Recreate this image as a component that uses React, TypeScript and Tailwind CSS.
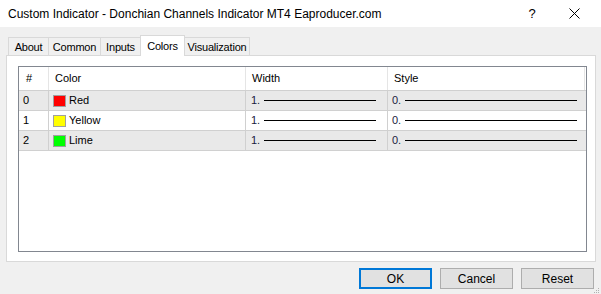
import React from "react";

const tabs = [
  { name: "About", w: "w-[41px]" },
  { name: "Common", w: "w-[53px]" },
  { name: "Inputs", w: "w-[41px]" },
  { name: "Colors", w: "w-[45px]" },
  { name: "Visualization", w: "w-[66px]" },
];

const rows = [
  { id: 0, name: "Red", swatch: "bg-[#ff0000]" },
  { id: 1, name: "Yellow", swatch: "bg-[#ffff00]" },
  { id: 2, name: "Lime", swatch: "bg-[#00ff00]" },
];

function Line({ width }: { width: string }) {
  return <div className={`h-px bg-black ${width}`} />;
}

export default function App() {
  return (
    <div
      className="w-[601px] h-[294px] bg-[#f0f0f0] text-[11px] text-black overflow-hidden"
      style={{ fontFamily: '"Liberation Sans", Arial, sans-serif' }}
    >
      {/* title bar */}
      <div className="h-[27px] bg-white flex items-center pl-2 pr-0">
        <div className="flex-1 text-[12px]">
          Custom Indicator - Donchian Channels Indicator MT4 Eaproducer.com
        </div>
        <div className="w-[46px] text-center text-[13px]">?</div>
        <div className="w-[46px] flex justify-center pr-2">
          <svg width="11" height="11" viewBox="0 0 11 11">
            <path d="M0.5 0.5 L10.5 10.5 M10.5 0.5 L0.5 10.5" stroke="#000" strokeWidth="1" />
          </svg>
        </div>
      </div>

      {/* tabs */}
      <div className="pl-[6px] pt-[8px]">
        <div className="flex pl-[2px] h-[20px] items-end relative z-10 tracking-[-0.2px] text-[11px]">
          {tabs.map((t, i) =>
            t.name === "Colors" ? (
              <div
                key={t.name}
                className={`${t.w} h-[21px] -mb-px -ml-px bg-white border border-b-0 border-[#d9d9d9] flex justify-center pt-[2px]`}
              >
                {t.name}
              </div>
            ) : (
              <div
                key={t.name}
                className={`${t.w} h-[18px] bg-[#f0f0f0] border border-b-0 border-[#d9d9d9] flex items-center justify-center pt-px ${
                  i === 0 ? "" : "-ml-px"
                }`}
              >
                {t.name}
              </div>
            )
          )}
        </div>

        {/* panel */}
        <div className="w-[590px] h-[207px] bg-white border border-[#d9d9d9] pl-[11px] pt-[10px] pr-[8px] pb-[9px]">
          <div className="h-full border border-[#828790] bg-white">
            <div className="flex h-[24px] items-center border-b border-[#d0d0d0] bg-white">
              <div className="w-[30px] pl-[7px] h-full flex items-center border-r border-[#e5e5e5]">#</div>
              <div className="w-[197px] pl-[6px] h-full flex items-center border-r border-[#e5e5e5]">Color</div>
              <div className="w-[142px] pl-[6px] h-full flex items-center border-r border-[#e5e5e5]">Width</div>
              <div className="w-[197px] pl-[6px] h-full flex items-center border-r border-[#e5e5e5]">Style</div>
            </div>
            {rows.map((r) => (
              <div
                key={r.id}
                className={`flex h-[20px] items-center border-b border-[#d0d0d0] ${
                  r.id % 2 === 0 ? "bg-[#e9e9e9]" : "bg-white"
                }`}
              >
                <div className="w-[30px] pl-[4px] h-full flex items-center border-r border-[#d0d0d0]">{r.id}</div>
                <div className="w-[197px] pl-[4px] h-full flex items-center gap-[3px] border-r border-[#d0d0d0]">
                  <div className={`w-[13px] h-[12px] border border-[#a0a0a0] ${r.swatch}`} />
                  <span>{r.name}</span>
                </div>
                <div className="w-[142px] pl-[5px] h-full flex items-center gap-[4px] border-r border-[#d0d0d0]">
                  <span className="text-[#1a1a40]">1.</span>
                  <Line width="w-[112px]" />
                </div>
                <div className="w-[197px] pl-[4px] h-full flex items-center gap-[4px]">
                  <span className="text-[#1a1a40]">0.</span>
                  <Line width="w-[172px]" />
                </div>
              </div>
            ))}
          </div>
        </div>
      </div>

      {/* buttons */}
      <div className="flex justify-end gap-[8px] pr-[7px] pt-[6px] relative text-[12px]">
        <button className="w-[73px] h-[21px] bg-[#e1e1e1] border-2 border-[#0078d7] flex items-center justify-center">
          OK
        </button>
        <button className="w-[73px] h-[21px] bg-[#e1e1e1] border border-[#adadad] flex items-center justify-center">
          Cancel
        </button>
        <button className="w-[73px] h-[21px] bg-[#e1e1e1] border border-[#adadad] flex items-center justify-center">
          Reset
        </button>
        <svg className="absolute right-[1px] top-[26px]" width="6" height="6" viewBox="0 0 6 6">
          <rect x="4" y="0" width="1" height="1" fill="#b0b0b0" />
          <rect x="2" y="2" width="1" height="1" fill="#b0b0b0" />
          <rect x="4" y="2" width="1" height="1" fill="#b0b0b0" />
          <rect x="0" y="4" width="1" height="1" fill="#b0b0b0" />
          <rect x="2" y="4" width="1" height="1" fill="#b0b0b0" />
          <rect x="4" y="4" width="1" height="1" fill="#b0b0b0" />
        </svg>
      </div>
    </div>
  );
}
